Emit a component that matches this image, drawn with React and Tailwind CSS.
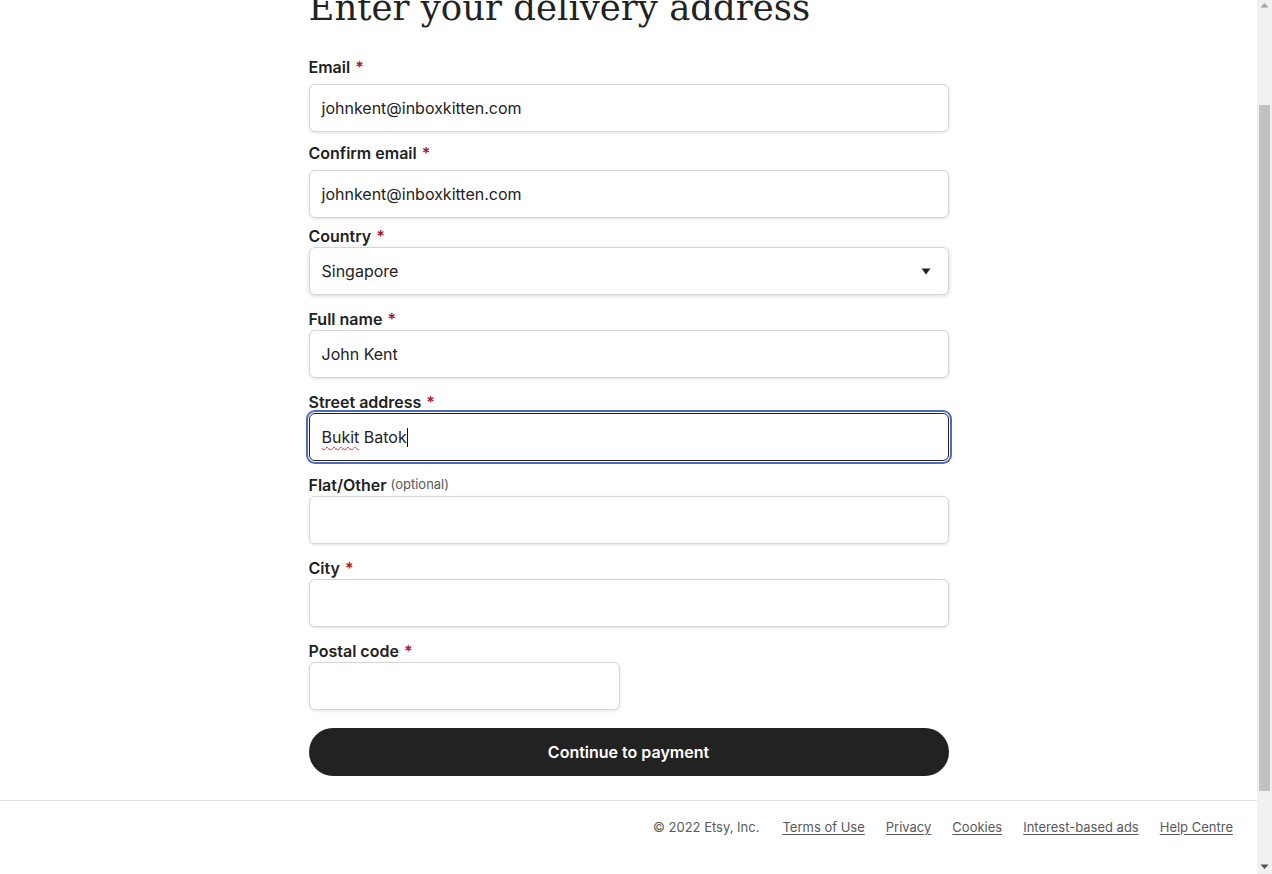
const sans = { fontFamily: 'Inter, "Liberation Sans", sans-serif' };

function Label({ text, required = true, optional = false, className = '' }) {
  return (
    <div className={`h-[22px] flex items-center text-[16px] font-semibold text-[#222] ${className}`}>
      {text}
      {required && <span className="ml-[5px] text-[#a61a2e]">*</span>}
      {optional && <span className="ml-1 text-[13px] font-normal text-[#595959]">(optional)</span>}
    </div>
  );
}

function Box({ children, className = 'w-[640px]' }) {
  return (
    <div
      className={`h-12 ${className} rounded-[6px] border border-[#d6d6d6] bg-white shadow-[0_1px_3px_rgba(34,34,34,0.12)] flex items-center px-[12px] text-[16px] text-[#222]`}
    >
      {children}
    </div>
  );
}

function ScrollBar() {
  return (
    <div className="w-[15px] shrink-0 bg-[#f1f1f1] flex flex-col items-center">
      <svg width="9" height="6" viewBox="0 0 9 6" className="mt-[2px]">
        <path d="M0.5 5.5 L4.5 1 L8.5 5.5 Z" fill="#a3a3a3" />
      </svg>
      <div className="mt-[97px] w-[11px] h-[686px] bg-[#c1c1c1]" />
      <div className="flex-1" />
      <svg width="9" height="6" viewBox="0 0 9 6" className="mb-[4px]">
        <path d="M0.5 0.5 L4.5 5 L8.5 0.5 Z" fill="#505050" />
      </svg>
    </div>
  );
}

export default function App() {
  return (
    <div className="h-[874px] w-[1272px] flex bg-white overflow-hidden" style={sans}>
      <div className="flex-1 flex flex-col">
        <main className="flex justify-center">
          <div className="w-[640px] flex flex-col">
            <div className="h-[28px] overflow-hidden flex flex-col justify-end">
              <h1
                className="text-[35.5px] leading-[40px] text-[#222] whitespace-nowrap"
                style={{ fontFamily: '"DejaVu Serif", "Liberation Serif", serif' }}
              >
                Enter your delivery address
              </h1>
            </div>

            <Label text="Email" className="mt-[28px]" />
            <Box className="w-[640px] mt-[6px]">johnkent@inboxkitten.com</Box>

            <Label text="Confirm email" className="mt-[10px]" />
            <Box className="w-[640px] mt-[6px]">johnkent@inboxkitten.com</Box>

            <Label text="Country" className="mt-[7px]" />
            <div className="h-12 w-[640px] rounded-[6px] border border-[#d6d6d6] bg-white shadow-[0_1px_4px_rgba(34,34,34,0.18)] flex items-center justify-between pl-[12px] pr-[17px] text-[16px] text-[#222]">
              <span>Singapore</span>
              <svg width="10" height="7" viewBox="0 0 10 7">
                <path d="M0.5 0.5 L9.5 0.5 L5 6.5 Z" fill="#222" />
              </svg>
            </div>

            <Label text="Full name" className="mt-[13px]" />
            <Box>John Kent</Box>

            <Label text="Street address" className="mt-[13px]" />
            <div className="h-12 w-[640px] rounded-[6px] border border-[#222] bg-white ring-2 ring-[#4d6bc6] ring-offset-1 flex items-center px-[12px] text-[16px] text-[#222]">
              <span className="underline decoration-wavy decoration-[#e0312f] decoration-1 underline-offset-[3px]">Bukit</span>
              <span className="whitespace-pre"> Batok</span>
              <span className="w-px h-[19px] bg-[#111]" />
            </div>

            <Label text="Flat/Other" required={false} optional className="mt-[13px]" />
            <Box />

            <Label text="City" className="mt-[13px]" />
            <Box />

            <Label text="Postal code" className="mt-[13px]" />
            <Box className="w-[311px]" />

            <button className="mt-[18px] h-12 w-[640px] rounded-full bg-[#222] text-white text-[16px] font-semibold">
              Continue to payment
            </button>
          </div>
        </main>

        <footer className="mt-[24px] border-t border-[#e1e1e1] flex-1">
          <div className="flex justify-end items-center gap-[21px] pr-[24px] pt-[17px] text-[13px] text-[#595959]">
            <span className="mr-[2px]">© 2022 Etsy, Inc.</span>
            <a className="underline underline-offset-2">Terms of Use</a>
            <a className="underline underline-offset-2">Privacy</a>
            <a className="underline underline-offset-2">Cookies</a>
            <a className="underline underline-offset-2">Interest-based ads</a>
            <a className="underline underline-offset-2">Help Centre</a>
          </div>
        </footer>
      </div>
      <ScrollBar />
    </div>
  );
}
